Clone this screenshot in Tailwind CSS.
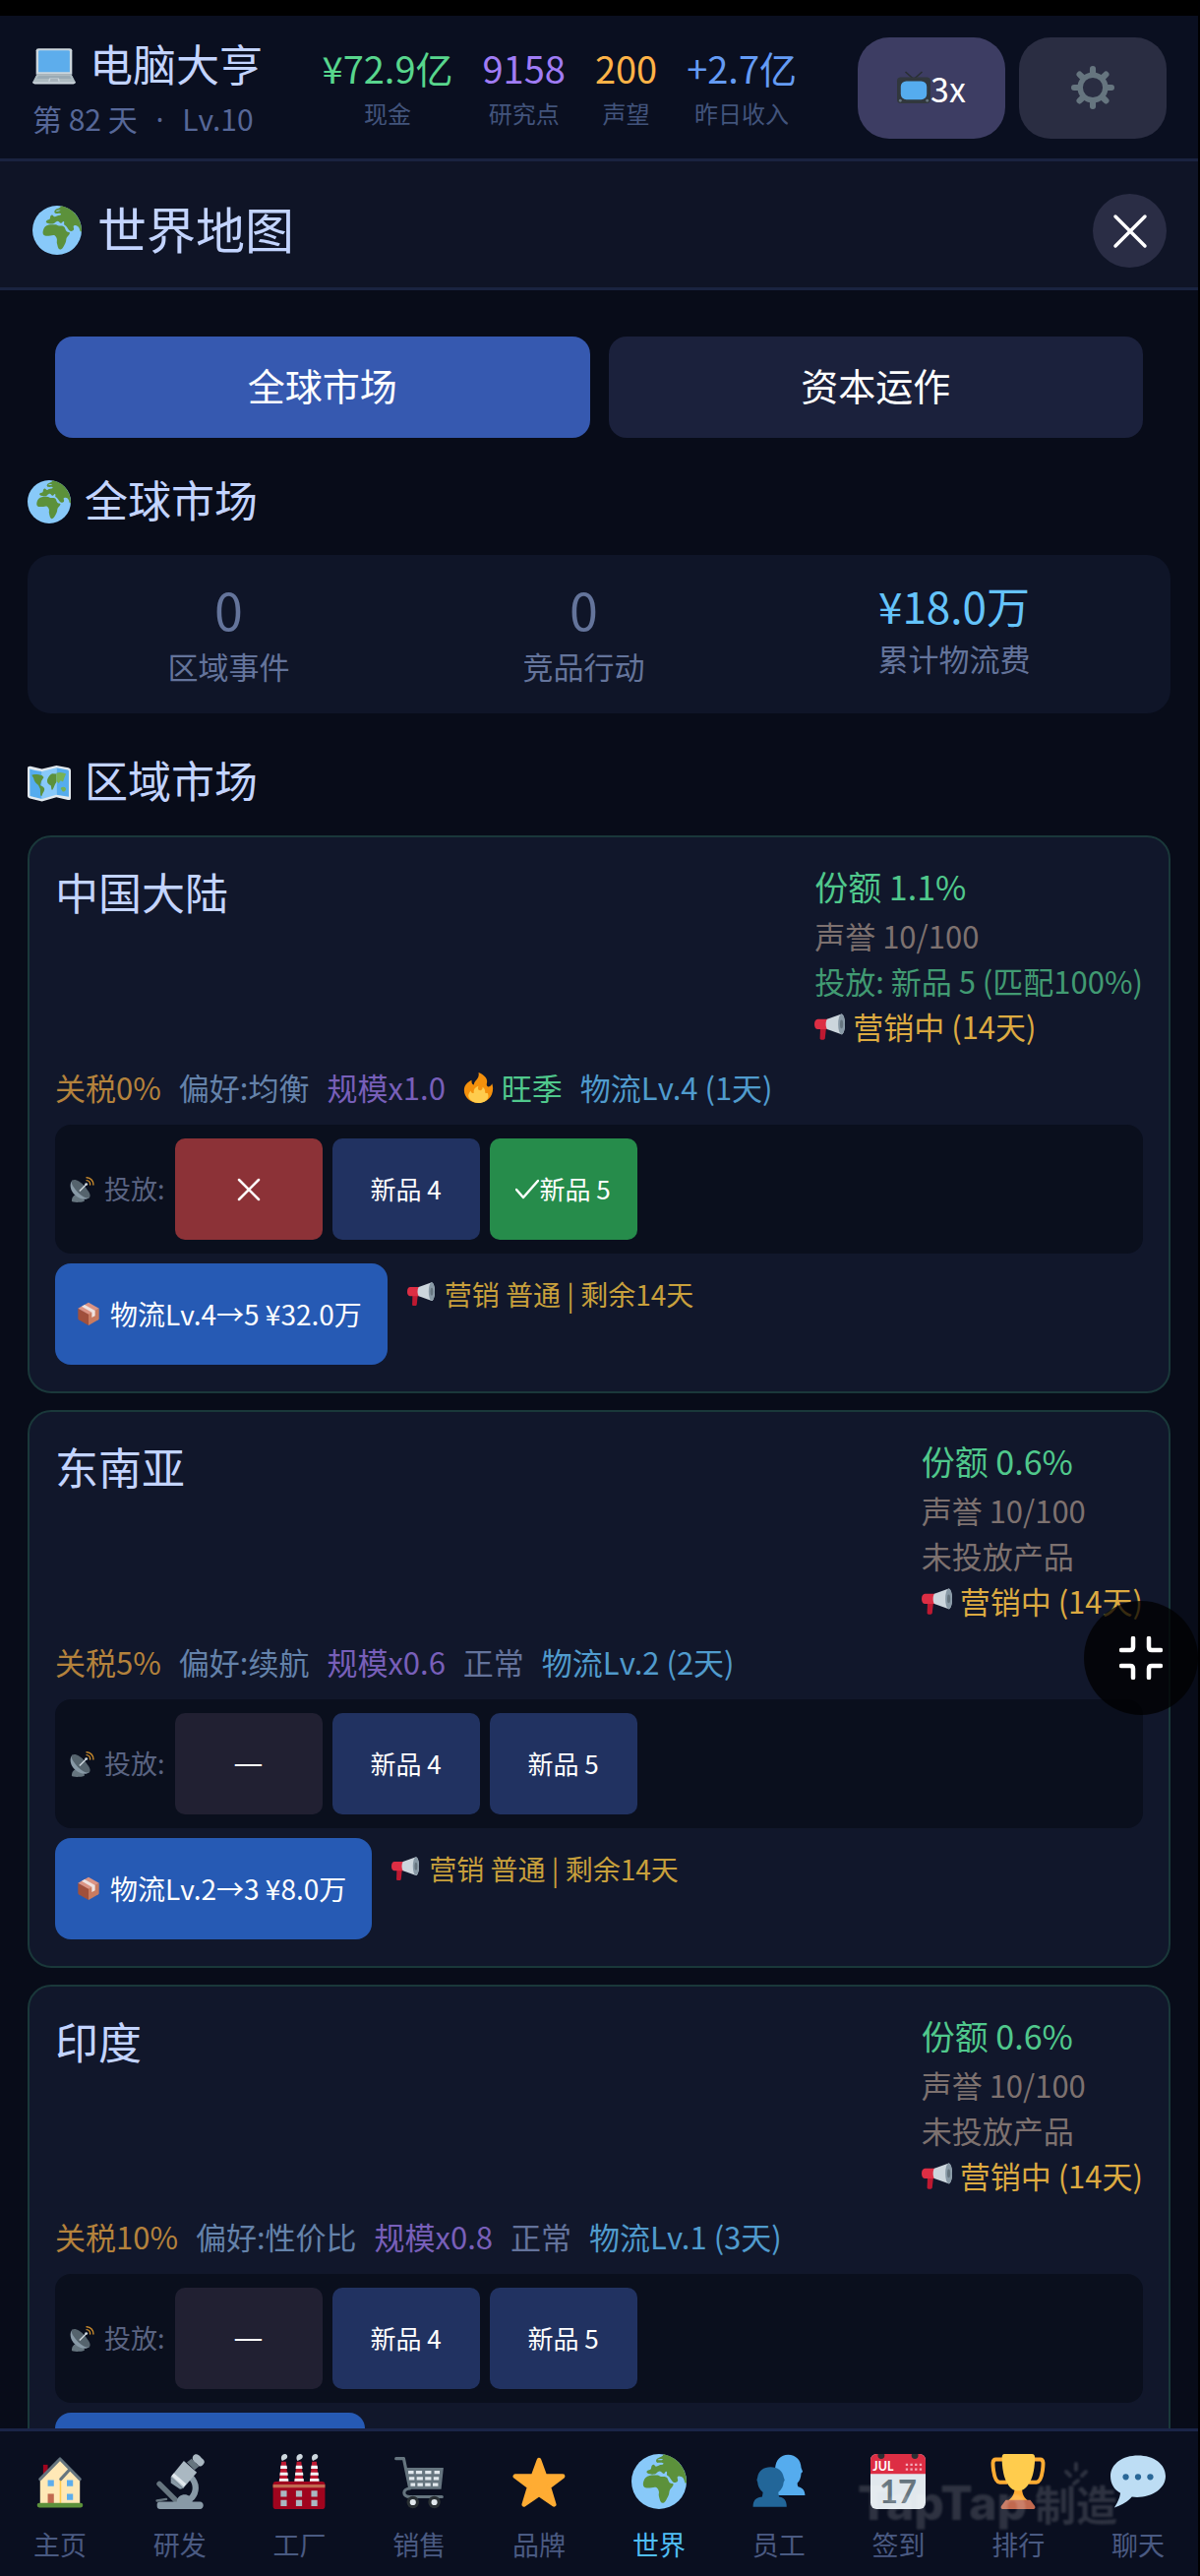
<!DOCTYPE html>
<html lang="zh-CN">
<head>
<meta charset="utf-8">
<meta name="viewport" content="width=device-width, initial-scale=1">
<title>电脑大亨 · 世界地图</title>
<script src="https://cdn.jsdelivr.net/npm/@tailwindcss/browser@4"></script>
</head>
<body class="bg-black font-['Noto_Sans_CJK_SC',sans-serif] text-[#c3d4ff]">

<!-- Icon sprite -->
<svg class="hidden" aria-hidden="true">
  <symbol id="globe" viewBox="0 0 36 36">
    <circle cx="18" cy="18" r="18" fill="#88c9f9"/>
    <path fill="#5c913b" d="M20 .2C29 1 36 9 36 18.500c-.3 1-.9.8-1.200-.1-.3-1.600-1-3.200-2.300-3.600-1.300-.5-2.200-.5-2.500.3-.2 1 .7 1.500.2 2.600-.6 1-2.300 1.400-3.200.4-1.300-1.300-2-3.300-3.400-3.900-.9-.4-.3-1.400-.4-2.200-.1-.9-1-.5-1.400.3-.5 1-1.700.4-2.300-.5-.9-1.100-2.100-.3-3 .6-.9 1-1.900.9-3.100.9-1.500 0-4.400-.8-3.200-2.200.8-.9 2.200-.5 2.600-1.500.3-1 .1-2.400 1.400-2.700 1-.2 1.200 1.600 2.300 1.200 1.400-.5 2.300-1.200 4-1.500.9-.2-.1-1.200-1.200-1-1.300.2-2.700.4-3.200-.8-.3-1.100.9-2.200 2.200-2.600 1.100-.4 1.900-.5 2.700-2z"/>
    <path fill="#88c9f9" d="M16 6.300c1-.8 3.500-.8 4.800-.2.500.6-.8.800-1.600.8-1.100.1-2.700.2-3.200-.6zM17 3.700c1-.6 2.500-.6 3.600-.2-.8.700-2.700.8-3.600.2z"/>
    <path fill="#5c913b" d="M8 17.600c.5-1.700 1.800-3.100 3.800-3.500 2-.5 4.200-.3 5.200-.2 1.200.1 1.500 1.100 2.700.9 1.700-.2 3.400 0 3.900 1.200.5 1.300.9 2.700 2.100 3.200 1.200.2 2 .1 1.500 1.300-.5 1.200-1.700 1.900-2.200 3.100-.5 1.300-.2 2.600-1 3.900-.8 1.500-1.600 3.800-3.200 4.500-1.500.3-2-1-2.300-2.200-.2-1.300-.9-2.500-.6-3.900.3-1.500-.3-2.900-1.400-3.900-1-.6-2.100-.2-3.400 0-2 .2-4.200.5-5.200-1-.5-1-.3-2.300.1-3.400z"/>
  </symbol>
  <symbol id="laptop" viewBox="0 0 36 36">
    <g transform="translate(0 2.600) scale(1 .87)">
    <path fill="#ccd6dd" d="M34 29.500 32.200 26H3.800L2 29.500z"/>
    <path fill="#ccd6dd" d="M5 1h26a2 2 0 0 1 2 2v23H3V3a2 2 0 0 1 2-2z"/>
    <path fill="#5dadec" d="M6 3h24a1 1 0 0 1 1 1v19.500H5V4a1 1 0 0 1 1-1z"/>
    <path fill="#aebbc1" d="M3.500 26h29L36 33.500H0z"/>
    <path fill="#9aaab4" d="M5 27h26l1.500 3H3.500z"/>
    <path fill="#ccd6dd" d="M0 33h36a2 2 0 0 1-2 2H2a2 2 0 0 1-2-2zM14 29.500h8l.8 3H13.200z"/>
    <path fill="#66757f" opacity=".35" d="M15 30h6l.6 2.500h-7.200z"/>
    </g>
  </symbol>
  <symbol id="tv" viewBox="0 0 36 36">
    <path d="M9 1l9 8 9-8" fill="none" stroke="#292f33" stroke-width="1.600"/>
    <rect y="7" width="36" height="28" rx="4" fill="#31373d"/>
    <rect x="4" y="11" width="28" height="20" rx="6" fill="#55acee"/>
    <circle cx="3.500" cy="32" r="1.500" fill="#66757f"/><circle cx="32.500" cy="32" r="1.500" fill="#66757f"/>
  </symbol>
  <symbol id="gear" viewBox="0 0 36 36">
    <g fill="none" stroke="#66757f">
      <circle cx="18" cy="18" r="10.500" stroke-width="4.500"/>
      <path stroke-width="5" stroke-linecap="round" d="M18 2.500v3M18 30.500v3M2.500 18h3M30.500 18h3M7 7l2 2M27 27l2 2M29 7l-2 2M9 27l-2 2"/>
    </g>
  </symbol>
  <symbol id="map" viewBox="0 0 36 36">
    <path fill="#e1e8ed" d="M0 6.500c0-1.500 1-2 2.500-1.700L12 7l12-3 10 2c1.200.4 2 1 2 2.500V31c0 1.500-1 2-2.500 1.700L24 30.500 12 34 2 31.500C.8 31 0 30.500 0 29z"/>
    <path fill="#55acee" d="M1.800 7c3 1 6 1.500 10.200 2v23L2 29.500zM24 6l9.500 1.700c.5.200.8.500.8 1V30L24 28.500z"/>
    <path fill="#88c9f9" d="M12 9l12-3v22.500L12 32z"/>
    <path fill="#5c913b" d="M3.500 12c2-1 6-.3 8.500.3l1.500 1.700-2 3-1 3.500c1.500 1 3.500 1.300 3.600 3.500-.5 2.500-1.600 3-2.300 5.500l-1-.5-.3-5.500-1.500-3C7 19 5.500 17 5 14.500zM16.500 15.500c1-2.500 2.500-4 4-4.700l3.500.3v7c-1.500 1.500-2 5-3.500 6.500-1-.5-.5-3-1.200-4-1.500-.8-3.500-2-2.800-5.100z"/>
    <path fill="#77b255" d="M24 10.500c2.500-1.500 6-.5 8 .5l-1.500 3.500-1 3-2-1-1.500 2.500-2-2zM27.500 23c1.500-1.500 4-1.500 4.500.8-.3 1.800-1.500 2.200-3 1.700z"/>
  </symbol>
  <symbol id="horn" viewBox="0 0 36 36">
    <path fill="#be1931" d="M7 18h7l-1.500 14c-.3 2-6 2-6 0z"/>
    <path fill="#dd2e44" d="M16 9H4c-2.500 0-4 2.500-4 6s1.500 6 4 6h12z"/>
    <path fill="#ccd6dd" d="M15 9 32 3c2 0 4 5 4 12s-2 12-4 12l-17-6c-2-3-2-9 0-12z"/>
    <ellipse cx="32" cy="15" rx="4" ry="12" fill="#8899a6"/><ellipse cx="32" cy="15" rx="1.800" ry="5" fill="#66757f"/>
  </symbol>
  <symbol id="fire" viewBox="0 0 36 36">
    <path fill="#f4900c" d="M35 19c0-2-.4-4-1-5.800-.7 2-2.500 3.500-4 3.500-3 0-2.500-3-2-5C29 7 24 2 18 0c1 5-1 7-4 10.500-1 1.200-1.500 2.500-1.500 4-2 0-3-3-2.500-5.500C5 11.500 1 15 1 21c0 8.500 7.500 15 17 15s17-7 17-17z"/>
    <path fill="#ffcc4d" d="M28.500 24c-1 1-3 .5-2.800-1.500.3-2-.7-4-3-5.500.5 3-1.700 4.500-3.700 4-2-.6-2-3-1-5-4.500 1.700-6 4.500-5.500 8-2 1-3.500-.5-3.500-2.500-2 2-3 4-3 6.500C7.500 33 12 36 18 36s11-3.500 11.500-7c.3-2-.2-3.800-1-5z"/>
  </symbol>
  <symbol id="dish" viewBox="0 0 36 36">
    <path fill="#66757f" d="M4 34c0-5 3-9 8-9s10 4 10 9c0 2-18 3-18 0z"/>
    <path fill="#8899a6" d="M5 5c-5 5-3 15 4 21s16 7 20 3z"/>
    <path fill="#55636d" d="M5 5c3-3 11 1 17 8s10 13 7 16-12-2-18-9S2 8 5 5z"/>
    <path fill="none" stroke="#ccd6dd" stroke-width="2" d="M15 20 24 11"/>
    <circle cx="24.500" cy="10.500" r="2" fill="#ccd6dd"/>
    <path fill="none" stroke="#c98a2c" stroke-width="2" stroke-linecap="round" d="M25 5c3 0 5 3 5 6M25 1c6 0 9.500 5 9.500 10"/>
  </symbol>
  <symbol id="box" viewBox="0 0 36 36">
    <path fill="#a0503c" d="M2 10 18 18v18L3 27.500c-.7-.4-1-1-1-2z"/>
    <path fill="#c97b60" d="M34 10 18 18v18l15-8.500c.7-.4 1-1 1-2z"/>
    <path fill="#dc9484" d="M2 10 18 1l16 9-16 9z"/>
    <path fill="#efe3e0" d="M7.500 7 12 4.500 28 13.500v8L23 24v-8z"/>
  </symbol>
  <symbol id="home" viewBox="0 0 36 36">
    <path fill="#a0041e" d="M7 7h3v8H7z"/>
    <path fill="#ffe8b6" d="M18 4 5 16.500V33h26V17z"/>
    <path fill="#ffcc4d" d="M17.800 17h1v16h-1z"/>
    <path fill="none" stroke="#66757f" stroke-width="2" stroke-linejoin="round" stroke-linecap="round" d="M5 16.500 18 3.200l13 13.300M18.500 16.500l6-6.500"/>
    <path fill="#5dadec" d="M10 17h4v4h-4zM22.500 17h4v4h-4zM22.500 26h4v4h-4z"/>
    <path fill="#c1694f" d="M10 26h4v7h-4z"/><rect x="3" y="32" width="30" height="3" rx="1.500" fill="#5c913b"/>
  </symbol>
  <symbol id="scope" viewBox="0 0 36 36">
    <path d="M4.500 19.500 16 31" stroke="#66757f" stroke-width="3.500" stroke-linecap="round"/>
    <path d="M3 30.500l6-1" stroke="#66757f" stroke-width="1.600" stroke-linecap="round"/>
    <path d="M25 15c5 5 4 13-3 16" fill="none" stroke="#8899a6" stroke-width="4"/>
    <path fill="#8899a6" d="M16 32c-1-6 9-8 10-1l2 2H14zM3 33c0-1.200.7-1.800 2-1.800h26c3 0 3 4.800 0 4.800H5c-1.300 0-2-1-2-2z"/>
    <path fill="#aab8c2" d="M20.500 4.500 29 12 20 22.500 12 15z"/>
    <path fill="#8899a6" d="M12 15l8 7.500-2 .5-6-4z"/>
    <path fill="#e1e8ed" d="M14 12.500l8 7-1.500 1.800-8-7z"/>
    <path fill="#66757f" d="M25.500 3l5 5-3 2.500-5-5z"/>
    <path fill="#aab8c2" d="M26.500 1.500c1.500-2.500 4-1 5 .5s4 2.500 1.500 5-3 0-4.500-1-3-2.500-2-4.500z"/>
  </symbol>
  <symbol id="factory" viewBox="0 0 36 36">
    <path fill="#be1931" d="M6.500 5h3L11 20H4.800zM16.500 5h3L21 20h-6.200zM26.500 5h3L31 20h-6.200z"/>
    <path fill="#f4f7f9" d="M6 7.500h4l.3 2.200H5.800zM5.600 12h5l.2 2H5.400zM5.200 16h5.800l.2 1.800H5zM16 7.500h4l.3 2.200h-4.500zM15.600 12h5l.2 2h-5.400zM15.200 16H21l.2 1.800H15zM26 7.500h4l.3 2.200h-4.500zM25.600 12h5l.2 2h-5.400zM25.200 16H31l.2 1.800H25z"/>
    <path fill="#ccd6dd" d="M7 4.500C5 1.500 8-.5 9.500.2 11 1 10.500 3 9 3.500zM17 4.500C15 1.500 18-.5 19.500.2 21 1 20.500 3 19 3.500zM27 4.500c-2-3 1-5 2.500-4.300C31 1 30.500 3 29 3.500z"/>
    <rect x="1" y="18" width="34" height="18" rx="2" fill="#a0041e"/>
    <path fill="#c1694f" d="M1 20h34v2H1z"/>
    <path fill="#aab8c2" d="M6 24h4v4H6zM16 24h4v4h-4zM26 24h4v4h-4zM6 30h4v4H6zM16 30h4v4h-4zM26 30h4v4h-4z"/>
  </symbol>
  <symbol id="cart" viewBox="0 0 36 36">
    <path fill="none" stroke="#66757f" stroke-width="2" stroke-linecap="round" stroke-linejoin="round" d="M3 3h5l4 19.500c-5 .5-5 5.500 0 5.500h21"/>
    <path fill="#66757f" d="M9 9h25l-1.500 14H12z"/>
    <path fill="#e1e8ed" d="M11 11h3.500v2H11zM16 11h4v2h-4zM22 11h4v2h-4zM28 11h3.500v2H28zM11.500 15H15v2h-3.500zM16.500 15h4v2h-4zM22 15h4v2h-4zM27.500 15h3.500v2h-3.500zM12.500 19H15.500v2h-3zM17 19h3.500v2H17zM22 19h3.500v2H22zM27 19h3.500v2H27z"/>
    <circle cx="14" cy="31.500" r="3" fill="#e1e8ed" stroke="#292f33" stroke-width="2"/><circle cx="28" cy="31.500" r="3" fill="#e1e8ed" stroke="#292f33" stroke-width="2"/>
  </symbol>
  <symbol id="star" viewBox="0 0 36 36">
    <path fill="#ffac33" stroke="#ffac33" stroke-width="3" stroke-linejoin="round" d="M18 4l3.800 10.500H33.500L24.300 21.500 27.800 33 18 26.300 8.200 33l3.500-11.500L2.500 14.500h11.700z"/>
  </symbol>
  <symbol id="staff" viewBox="0 0 36 36">
    <path fill="#55acee" d="M17 27v-9c-1.500-2-1.700-5-1.500-9C16 4 19 .5 24 .5s8.300 3.500 8.500 8.500l1 2.500-1 1c-.2 3-1 5-2.500 6.500 0 1.200.2 2 .5 2.300 3 .7 4.500 2.700 4.500 5.700z"/>
    <path fill="#226699" d="M1 34.500c0-4 1.500-6 6-6.500l.5-3C5 23 4.200 21 4 18.500L3.500 17l.5-2c.5-4 4-6.500 8.500-6.500s8 2.500 8.500 6.500l.7 2-.7 1.500c-.2 2.500-1 4.500-3.500 6.500l.5 3c3.500.5 5 2.500 5 6.500z"/>
  </symbol>
  <symbol id="calendar" viewBox="0 0 36 36">
    <rect width="36" height="36" rx="4" fill="#e1e8ed"/>
    <path fill="#dd2e44" d="M4 0h28a4 4 0 0 1 4 4v9H0V4a4 4 0 0 1 4-4z"/>
    <circle cx="7" cy="1" r="2.200" fill="#292f33"/><circle cx="29" cy="1" r="2.200" fill="#292f33"/>
    <path stroke="#f4abba" stroke-width="1.500" stroke-dasharray="1.500 1.500" d="M23 7h12M23 10h12"/>
    <text x="1.500" y="10.800" font-size="8" font-weight="700" fill="#fff" font-family="Lato, sans-serif">JUL</text>
    <text x="18" y="32" font-size="21" font-weight="700" fill="#66757f" text-anchor="middle" font-family="Lato, sans-serif">17</text>
  </symbol>
  <symbol id="trophy" viewBox="0 0 36 36">
    <path fill="none" stroke="#ffac33" stroke-width="2.500" d="M9 3.500H3.500C1 3.500 1.500 7 2 11c.7 5 2 7.500 4 7.500h5M27 3.500h5.500c2.500 0 2 3.500 1.500 7.500-.7 5-2 7.500-4 7.500h-5"/>
    <path fill="#ffac33" d="M16 20h4.500c0 5 .5 8 4 10.500h-13c3.500-2.500 4.500-5.500 4.500-10.500z"/>
    <path fill="#ffcc4d" d="M9 0h18c1.500 0 2 1 2 2.500C29 14 25 24 18 24S7.500 14 7.500 2.500C7.500 1 8 0 9 0z"/>
    <path fill="#c1694f" d="M10 30h16l3 4c.5 1 0 2-1 2H8c-1 0-1.500-1-1-2z"/>
  </symbol>
  <symbol id="chat" viewBox="0 0 36 36">
    <path fill="#bdddf4" d="M18 1C8 1 0 6.500 0 14.500c0 5 2.500 9 6.500 11C6 29 4.500 32 2.500 35 7.500 33.500 11.500 31 14 28c11 1.500 22-4.500 22-13.500C36 6.500 28 1 18 1z"/>
    <circle cx="10" cy="15" r="2" fill="#2a6797"/><circle cx="18" cy="15" r="2" fill="#2a6797"/><circle cx="26" cy="15" r="2" fill="#2a6797"/>
  </symbol>
</svg>

<div class="relative flex h-screen flex-col overflow-hidden border-t-16 border-r-2 border-black bg-[#080c19]">

  <header class="flex shrink-0 items-center border-b-3 border-[#1a2340] bg-[#0a0f20] pt-[17px] pr-8 pb-4 pl-[33px]">
    <div class="flex flex-col">
      <h1 class="flex items-center gap-3.5 text-[44px] leading-[62px]"><svg class="mt-1.5 size-[44px]"><use href="#laptop"/></svg>电脑大亨</h1>
      <p class="text-[30px] leading-[50px] text-[#566798]">第 82 天 <span class="px-3 font-['Noto_Sans'] leading-none">·</span> Lv.10</p>
    </div>
    <dl class="ml-auto flex gap-[30px] pb-1 text-center">
      <div class="flex flex-col-reverse"><dt class="text-2xl leading-9 text-[#42547c]">现金</dt><dd class="text-[38px] leading-[56px] text-[#58d68d]">¥72.9亿</dd></div>
      <div class="flex flex-col-reverse"><dt class="text-2xl leading-9 text-[#42547c]">研究点</dt><dd class="text-[38px] leading-[56px] text-[#a07cf5]">9158</dd></div>
      <div class="flex flex-col-reverse"><dt class="text-2xl leading-9 text-[#42547c]">声望</dt><dd class="text-[38px] leading-[56px] text-[#ffb347]">200</dd></div>
      <div class="flex flex-col-reverse"><dt class="text-2xl leading-9 text-[#42547c]">昨日收入</dt><dd class="text-[38px] leading-[56px] text-[#649bf5]">+2.7亿</dd></div>
    </dl>
    <div class="ml-[62px] flex gap-3.5">
      <button class="flex h-[103px] w-[150px] items-center justify-center rounded-[32px] bg-[#3d3d63] text-[34px] text-white"><svg class="size-[34px]"><use href="#tv"/></svg>3x</button>
      <button class="flex h-[103px] w-[150px] items-center justify-center rounded-[32px] bg-[#2a2d42]" aria-label="设置"><svg class="size-[44px]"><use href="#gear"/></svg></button>
    </div>
  </header>

  <div class="flex shrink-0 items-center justify-between border-b-3 border-[#1a2340] bg-[#0f1426] pt-[33px] pr-8 pb-5 pl-[33px]">
    <h2 class="flex items-center gap-4 pb-2 text-[50px] leading-[64px]"><svg class="mt-1.5 size-[50px]"><use href="#globe"/></svg>世界地图</h2>
    <button class="flex size-[75px] items-center justify-center rounded-full bg-[#2a2d45]" aria-label="关闭"><svg class="size-9" viewBox="0 0 36 36" fill="none" stroke="#fff" stroke-width="3.500" stroke-linecap="round"><path d="M3 3l30 30M33 3 3 33"/></svg></button>
  </div>

  <main class="flex min-h-0 flex-1 flex-col overflow-hidden px-7 pt-[47px]">
    <div class="grid shrink-0 grid-cols-2 gap-[19px] px-7">
      <button class="h-[103px] rounded-[18px] bg-[#3659b0] pb-1.5 text-[38px] text-white">全球市场</button>
      <button class="h-[103px] rounded-[18px] bg-[#1b213c] pb-1.5 text-[38px] text-white">资本运作</button>
    </div>

    <h3 class="mt-[30px] flex shrink-0 items-center gap-3.5 text-[44px] leading-[64px]"><svg class="mt-1.5 size-[44px]"><use href="#globe"/></svg>全球市场</h3>
    <dl class="mt-[25px] flex shrink-0 justify-around rounded-3xl bg-[#0f1528] px-6 pt-5 pb-[26px] text-center text-[#64749b]">
      <div class="flex flex-col-reverse justify-end"><dt class="text-[31px] leading-[45px]">区域事件</dt><dd class="text-[52px] leading-[70px]">0</dd></div>
      <div class="flex flex-col-reverse justify-end"><dt class="text-[31px] leading-[45px]">竞品行动</dt><dd class="text-[52px] leading-[70px]">0</dd></div>
      <div class="flex flex-col-reverse justify-end"><dt class="text-[31px] leading-[45px]">累计物流费</dt><dd class="text-[44px] leading-[62px] text-[#64c3fa]">¥18.0万</dd></div>
    </dl>

    <h3 class="mt-[35px] flex shrink-0 items-center gap-3.5 text-[44px] leading-[64px]"><svg class="mt-1.5 size-[44px]"><use href="#map"/></svg>区域市场</h3>

    <div class="mt-[25px] flex flex-col gap-[17px]">

      <article class="rounded-3xl border-2 border-[#1a383a] bg-[#11172b] px-[26px] pt-[23px] pb-[27px]">
        <div class="flex items-start justify-between">
          <h4 class="text-[44px] leading-[64px]">中国大陆</h4>
          <div class="flex flex-col text-[31px] leading-[46px]">
            <p class="text-[34px] leading-[54px] text-[#50c88c]">份额 1.1%</p>
            <p class="text-[#7d716f]">声誉 10/100</p>
            <p class="text-[#419a72]">投放: 新品 5 (匹配100%)</p>
            <p class="flex items-center gap-2 text-[#dcaa41]"><svg class="size-[31px]"><use href="#horn"/></svg>营销中 (14天)</p>
          </div>
        </div>
        <p class="mt-4 flex items-center gap-[18px] text-[31px] leading-[46px]">
          <span class="text-[#b4823c]">关税0%</span><span class="text-[#6482aa]">偏好:均衡</span><span class="text-[#785fb9]">规模x1.0</span><span class="flex items-center gap-2 text-[#50c88c]"><svg class="size-[31px]"><use href="#fire"/></svg>旺季</span><span class="text-[#509bcd]">物流Lv.4 (1天)</span>
        </p>
        <div class="mt-[15px] flex items-center gap-2.5 rounded-2xl bg-[#0a0f1d] p-[14px] text-[26px] text-white">
          <span class="flex items-center gap-2.5 text-[27px] text-[#5a6482]"><svg class="size-[26px]"><use href="#dish"/></svg>投放:</span>
          <button class="flex h-[103px] w-[150px] items-center justify-center rounded-[10px] bg-[#8c3237]" aria-label="取消投放"><svg class="size-6" viewBox="0 0 24 24" fill="none" stroke="#fff" stroke-width="2.500" stroke-linecap="round"><path d="M2 2l20 20M22 2 2 22"/></svg></button>
          <button class="h-[103px] w-[150px] rounded-[10px] bg-[#213261] pb-0.5">新品 4</button>
          <button class="flex h-[103px] w-[150px] items-center justify-center rounded-[10px] bg-[#268c4b] pb-0.5"><svg class="size-6" viewBox="0 0 24 24" fill="none" stroke="#fff" stroke-width="2.500" stroke-linecap="round" stroke-linejoin="round"><path d="M1 13l7 8L23 4"/></svg>新品 5</button>
        </div>
        <div class="mt-2.5 flex items-start gap-5 text-[28px]">
          <button class="flex h-[103px] items-center gap-2.5 rounded-2xl bg-[#265ab4] pr-[26px] pb-0.5 pl-[22px] text-white"><svg class="size-6"><use href="#box"/></svg>物流Lv.4→5 ¥32.0万</button>
          <p class="flex items-center gap-2.5 pt-2.5 leading-[42px] text-[#c8a03c]"><svg class="size-7"><use href="#horn"/></svg>营销 普通 | 剩余14天</p>
        </div>
      </article>

      <article class="rounded-3xl border-2 border-[#1a383a] bg-[#11172b] px-[26px] pt-[23px] pb-[27px]">
        <div class="flex items-start justify-between">
          <h4 class="text-[44px] leading-[64px]">东南亚</h4>
          <div class="flex flex-col text-[31px] leading-[46px]">
            <p class="text-[34px] leading-[54px] text-[#50c88c]">份额 0.6%</p>
            <p class="text-[#7d716f]">声誉 10/100</p>
            <p class="text-[#7d716f]">未投放产品</p>
            <p class="flex items-center gap-2 text-[#dcaa41]"><svg class="size-[31px]"><use href="#horn"/></svg>营销中 (14天)</p>
          </div>
        </div>
        <p class="mt-4 flex items-center gap-[18px] text-[31px] leading-[46px]">
          <span class="text-[#b4823c]">关税5%</span><span class="text-[#6482aa]">偏好:续航</span><span class="text-[#785fb9]">规模x0.6</span><span class="text-[#64739b]">正常</span><span class="text-[#509bcd]">物流Lv.2 (2天)</span>
        </p>
        <div class="mt-[15px] flex items-center gap-2.5 rounded-2xl bg-[#0a0f1d] p-[14px] text-[26px] text-white">
          <span class="flex items-center gap-2.5 text-[27px] text-[#5a6482]"><svg class="size-[26px]"><use href="#dish"/></svg>投放:</span>
          <button class="h-[103px] w-[150px] rounded-[10px] bg-[#212032] pb-1.5 text-[34px]">—</button>
          <button class="h-[103px] w-[150px] rounded-[10px] bg-[#213261] pb-0.5">新品 4</button>
          <button class="h-[103px] w-[150px] rounded-[10px] bg-[#213261] pb-0.5">新品 5</button>
        </div>
        <div class="mt-2.5 flex items-start gap-5 text-[28px]">
          <button class="flex h-[103px] items-center gap-2.5 rounded-2xl bg-[#265ab4] pr-[26px] pb-0.5 pl-[22px] text-white"><svg class="size-6"><use href="#box"/></svg>物流Lv.2→3 ¥8.0万</button>
          <p class="flex items-center gap-2.5 pt-2.5 leading-[42px] text-[#c8a03c]"><svg class="size-7"><use href="#horn"/></svg>营销 普通 | 剩余14天</p>
        </div>
      </article>

      <article class="rounded-3xl border-2 border-[#1a383a] bg-[#11172b] px-[26px] pt-[23px] pb-[27px]">
        <div class="flex items-start justify-between">
          <h4 class="text-[44px] leading-[64px]">印度</h4>
          <div class="flex flex-col text-[31px] leading-[46px]">
            <p class="text-[34px] leading-[54px] text-[#50c88c]">份额 0.6%</p>
            <p class="text-[#7d716f]">声誉 10/100</p>
            <p class="text-[#7d716f]">未投放产品</p>
            <p class="flex items-center gap-2 text-[#dcaa41]"><svg class="size-[31px]"><use href="#horn"/></svg>营销中 (14天)</p>
          </div>
        </div>
        <p class="mt-4 flex items-center gap-[18px] text-[31px] leading-[46px]">
          <span class="text-[#b4823c]">关税10%</span><span class="text-[#6482aa]">偏好:性价比</span><span class="text-[#785fb9]">规模x0.8</span><span class="text-[#64739b]">正常</span><span class="text-[#509bcd]">物流Lv.1 (3天)</span>
        </p>
        <div class="mt-[15px] flex items-center gap-2.5 rounded-2xl bg-[#0a0f1d] p-[14px] text-[26px] text-white">
          <span class="flex items-center gap-2.5 text-[27px] text-[#5a6482]"><svg class="size-[26px]"><use href="#dish"/></svg>投放:</span>
          <button class="h-[103px] w-[150px] rounded-[10px] bg-[#212032] pb-1.5 text-[34px]">—</button>
          <button class="h-[103px] w-[150px] rounded-[10px] bg-[#213261] pb-0.5">新品 4</button>
          <button class="h-[103px] w-[150px] rounded-[10px] bg-[#213261] pb-0.5">新品 5</button>
        </div>
        <div class="mt-2.5 flex items-start text-[28px]">
          <button class="h-[103px] w-[315px] rounded-2xl bg-[#265ab4] text-white" aria-label="升级物流"></button>
        </div>
      </article>
    </div>
  </main>

  <nav class="grid shrink-0 grid-cols-10 border-t-3 border-[#1a2447] bg-[#0a0f20] pt-[23px] pb-3 text-[27px] leading-10 text-[#4a5a82]">
    <a href="#" class="flex flex-col items-center gap-4"><svg class="size-14"><use href="#home"/></svg>主页</a>
    <a href="#" class="flex flex-col items-center gap-4"><svg class="size-14"><use href="#scope"/></svg>研发</a>
    <a href="#" class="flex flex-col items-center gap-4"><svg class="size-14"><use href="#factory"/></svg>工厂</a>
    <a href="#" class="flex flex-col items-center gap-4"><svg class="size-14"><use href="#cart"/></svg>销售</a>
    <a href="#" class="flex flex-col items-center gap-4"><svg class="size-14"><use href="#star"/></svg>品牌</a>
    <a href="#" class="flex flex-col items-center gap-4 text-[#50bef5]" aria-current="page"><svg class="size-14"><use href="#globe"/></svg>世界</a>
    <a href="#" class="flex flex-col items-center gap-4"><svg class="size-14"><use href="#staff"/></svg>员工</a>
    <a href="#" class="flex flex-col items-center gap-4"><svg class="size-14"><use href="#calendar"/></svg>签到</a>
    <a href="#" class="flex flex-col items-center gap-4"><svg class="size-14"><use href="#trophy"/></svg>排行</a>
    <a href="#" class="flex flex-col items-center gap-4"><svg class="size-14"><use href="#chat"/></svg>聊天</a>
  </nav>

  <!-- Watermark -->
  <div class="pointer-events-none absolute right-[82px] bottom-11 flex items-center gap-2 text-white/15 blur-[1px]">
    <span class="font-['Inter',sans-serif] text-5xl leading-[60px] font-extrabold">TapTap</span>
    <span class="text-[42px] leading-[60px] font-bold">制造</span>
    <svg class="absolute -top-3 right-7 size-7" viewBox="0 0 28 28" fill="none" stroke="currentColor" stroke-width="4" stroke-linecap="round"><path d="M14 2v6M4 10l4 4M24 10l-4 4M12 22l4-3"/></svg>
  </div>

  <!-- Floating exit-fullscreen control -->
  <button class="absolute top-[1611px] right-0 flex size-[116px] items-center justify-center rounded-full bg-black/75" aria-label="退出全屏">
    <svg class="size-11" viewBox="0 0 44 44" fill="none" stroke="#fff" stroke-width="4.500" stroke-linecap="round" stroke-linejoin="round"><path d="M14 2v9q0 3-3 3H2M30 2v9q0 3 3 3h9M2 30h9q3 0 3 3v9M42 30h-9q-3 0-3 3v9"/></svg>
  </button>
</div>
</body>
</html>
